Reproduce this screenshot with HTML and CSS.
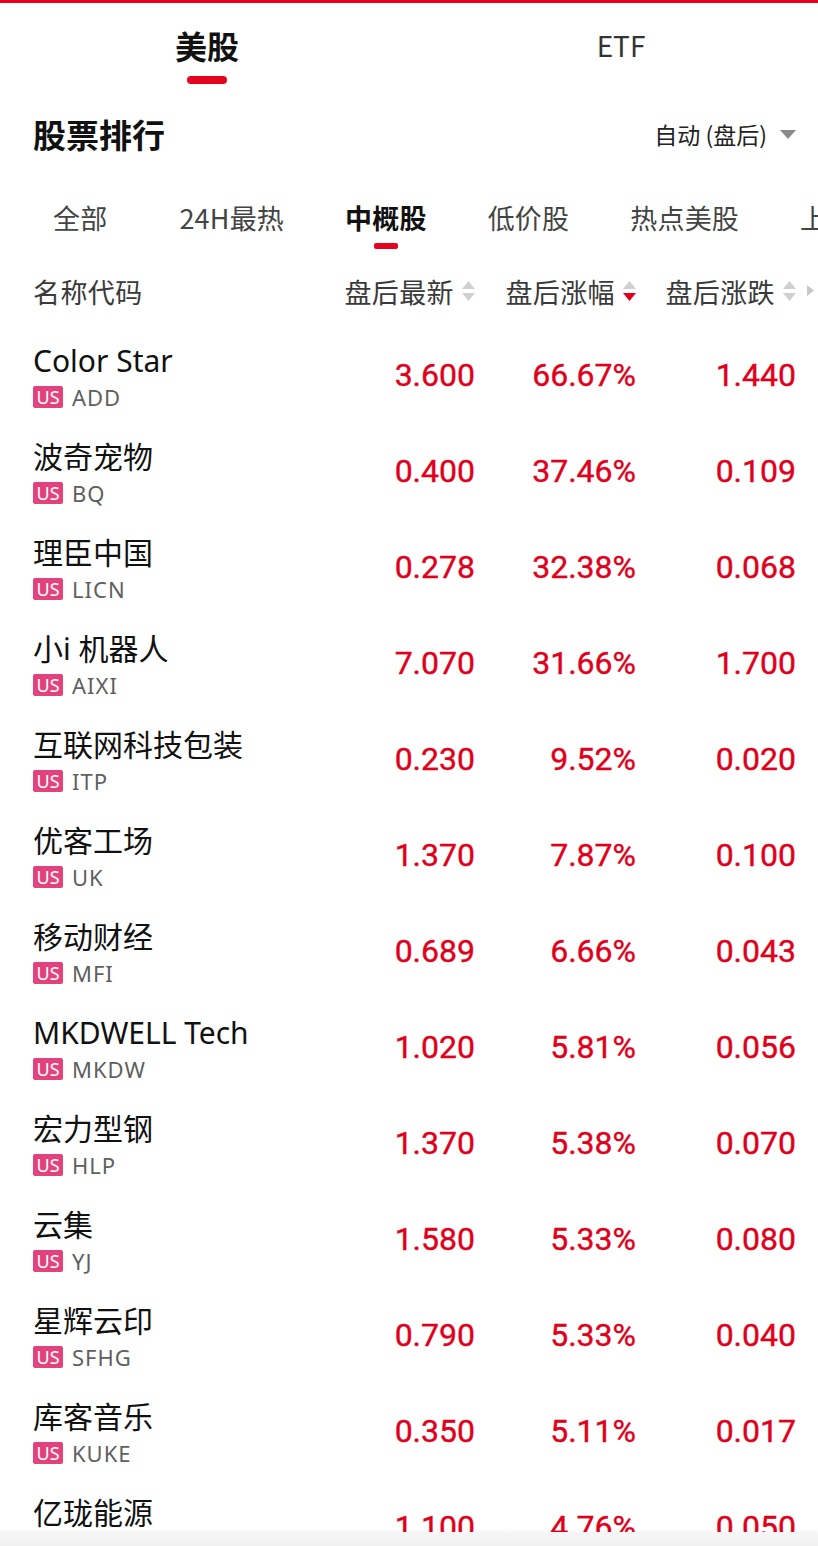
FILE: index.html
```html
<!DOCTYPE html>
<html lang="zh-CN">
<head>
<meta charset="utf-8">
<title>股票排行</title>
<link rel="stylesheet" href="styles.css">
</head>
<body>
<div class="page">
  <div class="topline"></div>
  <nav class="market-tabs">
    <div class="market-tab active"><span>美股</span><i class="bar"></i></div>
    <div class="market-tab"><span>ETF</span></div>
  </nav>

  <div class="title-row">
    <h1 class="title">股票排行</h1>
    <div class="mode">自动 (盘后)<svg class="caret" width="16" height="10" viewBox="0 0 16 10"><polygon points="0,0 16,0 8,9" fill="#8a8a8a"/></svg></div>
  </div>

  <div class="cat-tabs">
    <div class="cat first">全部</div>
    <div class="cat">24H最热</div>
    <div class="cat active">中概股<i class="bar"></i></div>
    <div class="cat">低价股</div>
    <div class="cat">热点美股</div>
    <div class="cat">上</div>
  </div>

  <div class="head">
    <div class="h-name">名称代码</div>
    <div class="h-col">盘后最新<svg class="sort" width="13" height="22" viewBox="0 0 13 22"><polygon points="0,8 6.5,0 13,8" fill="#d0d0d0"/><polygon points="0,12 13,12 6.5,20" fill="#d0d0d0"/></svg></div>
    <div class="h-col">盘后涨幅<svg class="sort" width="13" height="22" viewBox="0 0 13 22"><polygon points="0,8 6.5,0 13,8" fill="#d0d0d0"/><polygon points="0,12 13,12 6.5,20" fill="#e3001b"/></svg></div>
    <div class="h-col">盘后涨跌<svg class="sort" width="13" height="22" viewBox="0 0 13 22"><polygon points="0,8 6.5,0 13,8" fill="#d0d0d0"/><polygon points="0,12 13,12 6.5,20" fill="#d0d0d0"/></svg></div>
    <svg class="more" width="7" height="11" viewBox="0 0 7 11"><polygon points="0,0 7,5.5 0,11" fill="#c8c8c8"/></svg>
  </div>

  <div class="list">
    <div class="row"><div class="name"><div class="n">Color Star</div><div class="code"><span class="us">US</span>ADD</div></div><div class="num">3.600</div><div class="num">66.67%</div><div class="num">1.440</div></div>
    <div class="row"><div class="name"><div class="n">波奇宠物</div><div class="code"><span class="us">US</span>BQ</div></div><div class="num">0.400</div><div class="num">37.46%</div><div class="num">0.109</div></div>
    <div class="row"><div class="name"><div class="n">理臣中国</div><div class="code"><span class="us">US</span>LICN</div></div><div class="num">0.278</div><div class="num">32.38%</div><div class="num">0.068</div></div>
    <div class="row"><div class="name"><div class="n">小i 机器人</div><div class="code"><span class="us">US</span>AIXI</div></div><div class="num">7.070</div><div class="num">31.66%</div><div class="num">1.700</div></div>
    <div class="row"><div class="name"><div class="n">互联网科技包装</div><div class="code"><span class="us">US</span>ITP</div></div><div class="num">0.230</div><div class="num">9.52%</div><div class="num">0.020</div></div>
    <div class="row"><div class="name"><div class="n">优客工场</div><div class="code"><span class="us">US</span>UK</div></div><div class="num">1.370</div><div class="num">7.87%</div><div class="num">0.100</div></div>
    <div class="row"><div class="name"><div class="n">移动财经</div><div class="code"><span class="us">US</span>MFI</div></div><div class="num">0.689</div><div class="num">6.66%</div><div class="num">0.043</div></div>
    <div class="row"><div class="name"><div class="n">MKDWELL Tech</div><div class="code"><span class="us">US</span>MKDW</div></div><div class="num">1.020</div><div class="num">5.81%</div><div class="num">0.056</div></div>
    <div class="row"><div class="name"><div class="n">宏力型钢</div><div class="code"><span class="us">US</span>HLP</div></div><div class="num">1.370</div><div class="num">5.38%</div><div class="num">0.070</div></div>
    <div class="row"><div class="name"><div class="n">云集</div><div class="code"><span class="us">US</span>YJ</div></div><div class="num">1.580</div><div class="num">5.33%</div><div class="num">0.080</div></div>
    <div class="row"><div class="name"><div class="n">星辉云印</div><div class="code"><span class="us">US</span>SFHG</div></div><div class="num">0.790</div><div class="num">5.33%</div><div class="num">0.040</div></div>
    <div class="row"><div class="name"><div class="n">库客音乐</div><div class="code"><span class="us">US</span>KUKE</div></div><div class="num">0.350</div><div class="num">5.11%</div><div class="num">0.017</div></div>
    <div class="row"><div class="name"><div class="n">亿珑能源</div><div class="code"><span class="us">US</span>YLNY</div></div><div class="num">1.100</div><div class="num">4.76%</div><div class="num">0.050</div></div>
  </div>

  <div class="bottom-fade"></div>
</div>
</body>
</html>
```

FILE: styles.css
```css
* { box-sizing: border-box; }
html, body { margin: 0; padding: 0; background: #fff; }
body {
  width: 818px;
  height: 1546px;
  overflow: hidden;
  font-family: "Noto Sans", "Noto Sans CJK SC", sans-serif;
  color: #111;
}
.page { position: relative; width: 818px; height: 1546px; overflow: hidden; }

.topline { height: 3px; background: #e8001f; }

.market-tabs {
  display: grid;
  grid-template-columns: 414px 414px;
  padding-top: 20px;
}
.market-tab {
  display: flex;
  flex-direction: column;
  align-items: center;
  height: 64px;
}
.market-tab span {
  font-family: "Noto Sans CJK SC", sans-serif;
  font-size: 28px;
  line-height: 44px;
  color: #333;
}
.market-tab.active span { font-size: 32px; font-weight: 700; color: #111; }
.market-tab .bar {
  display: block;
  width: 40px;
  height: 8px;
  border-radius: 4px;
  background: #e8001f;
  margin-top: 9px;
}

.title-row {
  display: flex;
  justify-content: space-between;
  align-items: center;
  height: 48px;
  margin-top: 23px;
  padding: 0 22px 0 33px;
}
.title {
  margin: 0;
  font-family: "Noto Sans CJK SC", sans-serif;
  font-size: 33px;
  font-weight: 700;
  line-height: 48px;
  color: #111;
}
.mode {
  display: flex;
  align-items: center;
  font-family: "Noto Sans CJK SC", sans-serif;
  font-size: 23px;
  color: #222;
}
.caret { margin-left: 13px; margin-top: 2px; }

.cat-tabs {
  display: flex;
  gap: 61px;
  margin-top: 40px;
  padding-left: 53px;
  white-space: nowrap;
  height: 51px;
}
.cat {
  position: relative;
  font-family: "Noto Sans CJK SC", sans-serif;
  font-size: 27px;
  letter-spacing: 0.2px;
  line-height: 40px;
  color: #444;
  flex: none;
}
.cat.first { margin-right: 11px; }
.cat.active { color: #111; font-weight: 700; }
.cat .bar {
  position: absolute;
  left: 50%;
  top: 45px;
  width: 24px;
  height: 6px;
  margin-left: -12px;
  border-radius: 2px;
  background: #e8001f;
}

.head {
  position: relative;
  display: grid;
  grid-template-columns: 1fr 160px 161px 160px;
  align-items: center;
  height: 60px;
  margin-top: 12px;
  padding: 0 22px 0 33px;
  font-family: "Noto Sans CJK SC", sans-serif;
  font-size: 27px;
  letter-spacing: 0.4px;
  color: #3a3a3a;
}
.h-col { display: flex; justify-content: flex-end; align-items: center; }
.sort { margin-left: 8px; margin-top: 1px; }
.more { position: absolute; right: 4px; top: 24px; }

.row {
  display: grid;
  grid-template-columns: 1fr 160px 161px 160px;
  height: 96px;
  padding: 22px 22px 0 33px;
}
.name { min-width: 0; }
.n {
  font-size: 30px;
  line-height: 36px;
  color: #111;
  white-space: nowrap;
}
.code {
  display: flex;
  align-items: center;
  height: 28px;
  margin-top: 4px;
  font-size: 22px;
  letter-spacing: 1px;
  color: #5f5f5f;
}
.us {
  display: inline-block;
  width: 30px;
  height: 22px;
  margin-right: 9px;
  border-radius: 2px;
  background: #e3437d;
  color: #fff;
  font-size: 18px;
  line-height: 22px;
  text-align: center;
  letter-spacing: 0;
}
.num {
  padding-top: 12px;
  text-align: right;
  font-family: Roboto, "Noto Sans", sans-serif;
  font-weight: 400;
  font-size: 32px;
  line-height: 40px;
  letter-spacing: 0;
  color: #e0001b;
  -webkit-text-stroke: 0.4px #e0001b;
}

.bottom-fade {
  position: absolute;
  left: 0;
  right: 0;
  bottom: 0;
  height: 14px;
  background: linear-gradient(#f6f6f6, #f1f1f1);
  box-shadow: 0 -2px 3px rgba(0, 0, 0, 0.03);
}
```
